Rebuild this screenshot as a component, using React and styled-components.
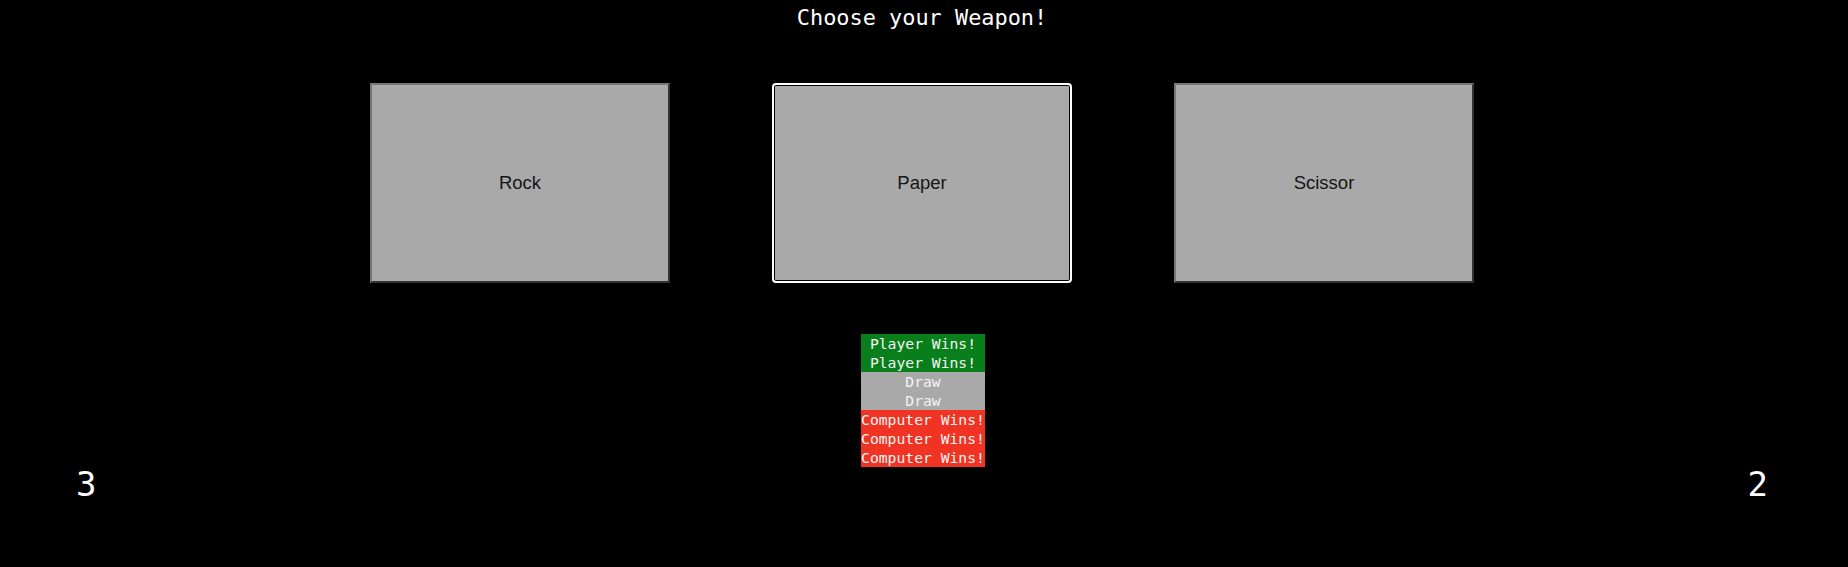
import styled, { createGlobalStyle } from 'styled-components';

const GlobalStyle = createGlobalStyle`
  body {
    margin: 0;
    background: #000;
    color: #fff;
    font-family: "DejaVu Sans Mono", "Liberation Mono", monospace;
  }
`;

const results = [
  { kind: 'player', text: 'Player Wins!' },
  { kind: 'player', text: 'Player Wins!' },
  { kind: 'draw', text: 'Draw' },
  { kind: 'draw', text: 'Draw' },
  { kind: 'computer', text: 'Computer Wins!' },
  { kind: 'computer', text: 'Computer Wins!' },
  { kind: 'computer', text: 'Computer Wins!' },
];

const weapons = ['Rock', 'Paper', 'Scissor'];

export default () => (
  <Page>
    <GlobalStyle />
    {/* HEADER */}
    <Title>Choose your Weapon!</Title>

    {/* WEAPON BUTTONS */}
    <Weapons>
      {weapons.map((w) => (
        <WeaponButton key={w} focused={w === 'Paper'}>{w}</WeaponButton>
      ))}
    </Weapons>

    {/* HISTORY */}
    <History>
      {results.map((r, i) => (
        <ResultRow key={i} kind={r.kind}>{r.text}</ResultRow>
      ))}
    </History>

    {/* SCORES */}
    <Scores>
      <Score>3</Score>
      <Score>2</Score>
    </Scores>
  </Page>
);

const Page = styled.div`
  display: flex;
  flex-direction: column;
  align-items: center;
  width: 100%;
  min-height: 567px;
`;

const Title = styled.h1`
  margin: 0 4px 0 0;
  padding-top: 5px;
  font-size: 21.9px;
  font-weight: normal;
  line-height: 25px;
  color: #fff;
`;

const Weapons = styled.div`
  display: flex;
  justify-content: center;
  gap: 102px;
  margin-top: 53px;
  margin-right: 4px;
`;

const WeaponButton = styled.button`
  width: 300px;
  height: 200px;
  background: #a9a9a9;
  color: #161616;
  font-family: "Liberation Sans", Arial, sans-serif;
  font-size: 18.5px;
  border: 2px solid;
  border-color: #767676 #333 #333 #767676;
  padding: 0;
  cursor: pointer;

  ${(p) => p.focused && `
    border: 2px solid #fff;
    border-radius: 4px;
    box-shadow: inset 0 0 0 1px #000;
  `}
`;

const rowColors = {
  player: '#087f1b',
  draw: '#a9a9a9',
  computer: '#f03323',
};

const History = styled.div`
  display: flex;
  flex-direction: column;
  width: fit-content;
  margin-top: 51px;
  margin-right: 2px;
`;

const ResultRow = styled.div`
  background: ${(p) => rowColors[p.kind]};
  color: #f4f4f4;
  font-size: 14.7px;
  line-height: 19px;
  text-align: center;
  white-space: nowrap;
`;

const Scores = styled.div`
  display: flex;
  justify-content: space-between;
  align-self: stretch;
  padding: 0 80px 0 76px;
  margin-top: -3px;
`;

const Score = styled.div`
  font-size: 34px;
  line-height: 40px;
  color: #fff;
`;
